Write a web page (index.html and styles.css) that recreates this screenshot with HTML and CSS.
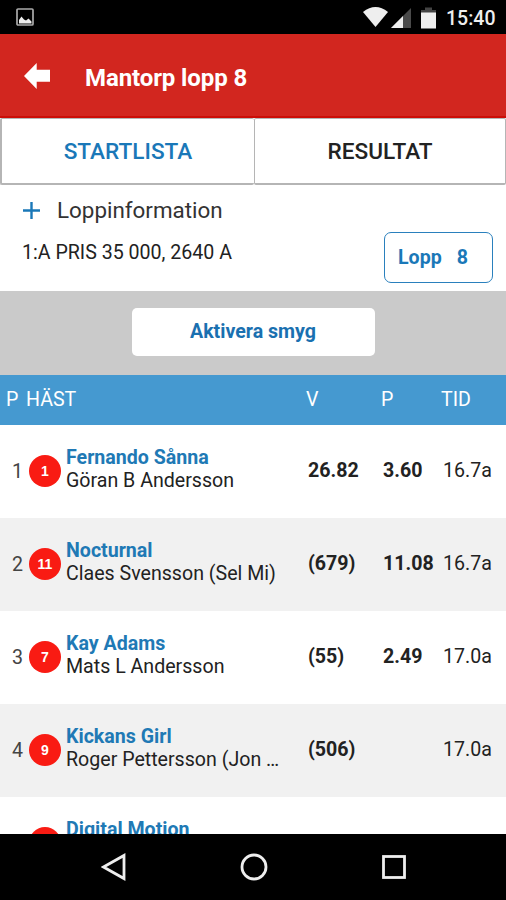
FILE: index.html
```html
<!DOCTYPE html>
<html lang="sv">
<head>
    <meta charset="UTF-8">
    <meta name="viewport" content="width=device-width, initial-scale=1.0">
    <title>Mantorp lopp 8</title>
    <link rel="stylesheet" href="styles.css">
</head>
<body>
<div class="statusbar">
    <svg class="picture" width="18" height="18" viewBox="0 0 18 18">
        <rect x="1" y="1" width="16" height="16" rx="1" fill="none" stroke="#aaa" stroke-width="1.7"/>
        <path d="M3 15.500V12L5.500 8.500L8 11.500L10 12.500L12.500 10.500L15.500 13.500V15.500Z" fill="#eee"/>
    </svg>
    <svg class="wifi" width="25" height="20" viewBox="0 0 25 20">
        <path d="M0 5Q12.500 -5 25 5L12.500 20Z" fill="#eee"/>
    </svg>
    <svg class="signal" width="20" height="20" viewBox="0 0 20 20">
        <path d="M0 20L20 0V20Z" fill="#4a4a4a"/>
        <path d="M0 20L12 8V20Z" fill="#eee"/>
    </svg>
    <svg class="battery" width="15" height="22" viewBox="0 0 15 22">
        <path d="M0 6V3H4V0.500H11V3H15V6Z" fill="#444"/>
        <rect y="5.500" width="15" height="16" fill="#eee"/>
    </svg>
    <span class="clock">15:40</span>
</div>

<header class="header">
    <svg width="26" height="26" viewBox="0 0 26 26">
        <path d="M0 13L12.700 0V6.700H26V18.700H12.700V26Z" fill="#fff"/>
    </svg>
    <h1>Mantorp lopp 8</h1>
</header>

<nav class="tabs">
    <div class="tab active">STARTLISTA</div>
    <div class="tab">RESULTAT</div>
</nav>

<section class="info">
    <div class="info-text">
        <div class="info-title">
            <svg width="17" height="17" viewBox="0 0 17 17">
                <path d="M8.500 0V17M0 8.500H17" stroke="#1a78b8" stroke-width="2.400"/>
            </svg>
            <span>Loppinformation</span>
        </div>
        <p>1:A PRIS 35 000, 2640 A</p>
    </div>
    <div class="lopp"><span>Lopp</span><span>8</span></div>
</section>

<div class="smyg">
    <div class="smyg-button">Aktivera smyg</div>
</div>

<main class="list">
    <div class="list-head">
        <span>P</span><span>HÄST</span><span>V</span><span>P</span><span>TID</span>
    </div>
    <div class="row">
        <span class="place">1</span>
        <span class="number">1</span>
        <div class="horse"><b>Fernando Sånna</b><span>Göran B Andersson</span></div>
        <b>26.82</b>
        <b>3.60</b>
        <span class="time">16.7a</span>
    </div>
    <div class="row">
        <span class="place">2</span>
        <span class="number">11</span>
        <div class="horse"><b>Nocturnal</b><span>Claes Svensson (Sel Mi)</span></div>
        <b>(679)</b>
        <b>11.08</b>
        <span class="time">16.7a</span>
    </div>
    <div class="row">
        <span class="place">3</span>
        <span class="number">7</span>
        <div class="horse"><b>Kay Adams</b><span>Mats L Andersson</span></div>
        <b>(55)</b>
        <b>2.49</b>
        <span class="time">17.0a</span>
    </div>
    <div class="row">
        <span class="place">4</span>
        <span class="number">9</span>
        <div class="horse"><b>Kickans Girl</b><span>Roger Pettersson (Jon …</span></div>
        <b>(506)</b>
        <b></b>
        <span class="time">17.0a</span>
    </div>
    <div class="row">
        <span class="place"></span>
        <span class="number"></span>
        <div class="horse"><b>Digital Motion</b><span></span></div>
    </div>
</main>

<footer class="navbar">
    <svg width="26" height="28" viewBox="0 0 26 28">
        <path d="M2.500 14L23 2.500V25.500Z" fill="none" stroke="#eee" stroke-width="2.800"/>
    </svg>
    <svg width="28" height="28" viewBox="0 0 28 28">
        <circle cx="14" cy="14" r="12" fill="none" stroke="#eee" stroke-width="2.800"/>
    </svg>
    <svg width="26" height="26" viewBox="0 0 26 26">
        <rect x="2.500" y="2.500" width="21" height="21" fill="none" stroke="#eee" stroke-width="2.800"/>
    </svg>
</footer>
</body>
</html>
```
FILE: styles.css
```css
* {
    box-sizing: border-box;
}
body {
    margin: 0;
    height: 900px;
    display: flex;
    flex-direction: column;
    overflow: hidden;
    background: #fff;
    color: #222;
    font-family: Roboto, sans-serif;
    font-size: 19.6px;
}
b {
    font-weight: 700;
}
.statusbar {
    height: 34px;
    flex: none;
    display: flex;
    align-items: center;
    padding: 0 11px 0 16px;
    background: #000;
    color: #eee;
}
.wifi {
    margin-left: auto;
}
.signal {
    margin: 1px 10px 0 3px;
}
.battery {
    margin: 1px 10px 0 0;
}
.clock {
    font-size: 19.5px;
    font-weight: 500;
    width: 49px;
    white-space: nowrap;
    margin-top: 2px;
}
.header {
    height: 84px;
    flex: none;
    display: flex;
    align-items: center;
    padding: 2px 24px 0;
    background: #d2261f;
    border-bottom: 2px solid #cc0d07;
    color: #fff;
}
.header h1 {
    margin: 3px 0 0 35px;
    font-size: 24px;
    font-weight: 700;
    letter-spacing: -0.1px;
}
.tabs {
    height: 67px;
    flex: none;
    display: grid;
    grid-template-columns: 254px 252px;
}
.tab {
    display: flex;
    align-items: center;
    justify-content: center;
    border: 1px solid #b5b5b5;
    border-bottom-width: 2px;
    border-right: 0;
    border-left-width: 2px;
    border-radius: 2px;
    font-size: 22.6px;
    font-weight: 500;
}
.tab:last-child {
    border-left-width: 1px;
    border-right: 1px solid #b5b5b5;
}
.tab.active {
    color: #1a78b8;
}
.info {
    height: 106px;
    flex: none;
    display: flex;
    justify-content: space-between;
    padding: 11px 13px 0 22px;
}
.info-title {
    display: flex;
    align-items: center;
    height: 28px;
    gap: 17px;
    padding-left: 1px;
    font-size: 22.4px;
    color: #333;
}
.info p {
    margin: 17px 0 0;
    line-height: 24px;
}
.lopp {
    display: flex;
    gap: 15px;
    align-items: center;
    width: 109px;
    height: 51px;
    margin-top: 36px;
    padding: 0 0 1px 13px;
    border: 1px solid #2a80bd;
    border-radius: 7px;
    color: #1a78b8;
    font-weight: 700;
}
.smyg {
    height: 84px;
    flex: none;
    display: flex;
    align-items: center;
    justify-content: center;
    background: #cacaca;
}
.smyg-button {
    width: 243px;
    height: 48px;
    margin-bottom: 2px;
    border-radius: 5px;
    background: #fff;
    color: #1a70b0;
    font-weight: 700;
    line-height: 48px;
    text-align: center;
}
.list {
    flex: 1;
    min-height: 0;
    overflow: hidden;
}
.list-head {
    display: grid;
    grid-template-columns: 20px 280px 75px 60px auto;
    align-items: center;
    height: 50px;
    padding: 0 0 1px 6px;
    background: #4599d0;
    color: #fff;
}
.row {
    display: grid;
    grid-template-columns: 17px 37px 242px 75px 60px auto;
    align-items: center;
    height: 92.9px;
    padding: 0 0 1px 12px;
}
.row:nth-child(odd) {
    background: #f1f1f1;
}
.place {
    padding-top: 1px;
    color: #444;
}
.number {
    width: 32px;
    height: 32px;
    border-radius: 50%;
    background: #f91b13;
    color: #fff;
    font: bold 14px/32px "Liberation Sans", sans-serif;
    text-align: center;
}
.horse {
    display: flex;
    flex-direction: column;
    margin-top: -3px;
    line-height: 23px;
    white-space: nowrap;
}
.horse b {
    height: 23px;
    color: #2079b5;
}
.horse span {
    height: 23px;
}
.navbar {
    height: 66px;
    flex: none;
    display: flex;
    align-items: center;
    justify-content: space-between;
    padding: 0 99px 0 101px;
    background: #000;
}
```
